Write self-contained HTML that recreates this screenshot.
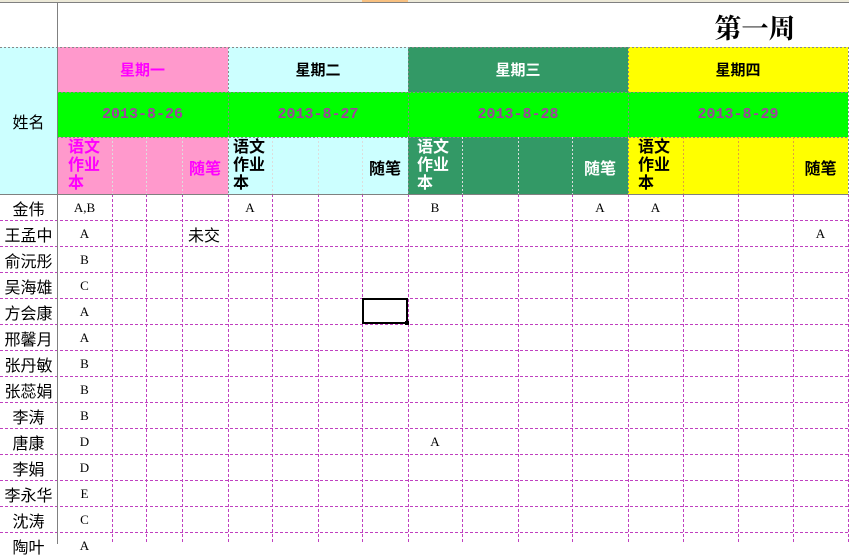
<!DOCTYPE html>
<html><head><meta charset="utf-8"><style>
body{margin:0;width:849px;height:544px;overflow:hidden;background:#fff;font-family:"Liberation Sans","Noto Sans CJK SC",sans-serif;position:relative}
.c{position:absolute;display:flex;align-items:center;justify-content:center;white-space:nowrap}
.b{font-weight:bold;font-size:15px}
.pk{background:#ff99cc;color:#ff00ff}.cy{background:#ccffff;color:#000}.gr{background:#339966;color:#fff}.ye{background:#ffff00;color:#000}
.dt{background:#00ff00;color:#a040a0;font-family:"Liberation Mono",monospace;font-size:15px;font-weight:bold}
.w{font-weight:bold;font-size:16px;line-height:18px;position:absolute;top:139px;white-space:nowrap}
.n{position:absolute;left:0;width:57px;height:26px;display:flex;align-items:center;justify-content:center;font-size:16px}
.l{position:absolute;height:26px;display:flex;align-items:center;justify-content:center;font-family:"Liberation Serif",serif;font-size:13px}
svg{position:absolute;left:0;top:0}
</style></head><body>
<div style="position:absolute;left:0;top:0;width:849px;height:3px;background:#ece9d8"></div>
<div style="position:absolute;left:362px;top:0;width:46px;height:3px;background:#f8c080"></div>
<div class="c" style="left:690px;top:5px;width:130px;height:42px;font-family:'Noto Serif CJK SC',serif;font-weight:bold;font-size:27px">第一周</div>

<div class="c cy" style="left:0;top:47px;width:57px;height:147px;font-size:16px">姓名</div>
<div class="c pk b" style="left:57px;top:47px;width:171px;height:45px">星期一</div>
<div class="c cy b" style="left:228px;top:47px;width:180px;height:45px">星期二</div>
<div class="c gr b" style="left:408px;top:47px;width:220px;height:45px">星期三</div>
<div class="c ye b" style="left:628px;top:47px;width:220px;height:45px">星期四</div>
<div class="c dt" style="left:57px;top:92px;width:171px;height:45px">2013-8-26</div>
<div class="c dt" style="left:228px;top:92px;width:180px;height:45px">2013-8-27</div>
<div class="c dt" style="left:408px;top:92px;width:220px;height:45px">2013-8-28</div>
<div class="c dt" style="left:628px;top:92px;width:220px;height:45px">2013-8-29</div>
<div class="pk" style="position:absolute;left:57px;top:137px;width:171px;height:57px"></div>
<div class="cy" style="position:absolute;left:228px;top:137px;width:180px;height:57px"></div>
<div class="gr" style="position:absolute;left:408px;top:137px;width:220px;height:57px"></div>
<div class="ye" style="position:absolute;left:628px;top:137px;width:220px;height:57px"></div>
<div class="w" style="left:68px;color:#ff00ff">语文<br>作业<br>本</div>
<div class="w" style="left:233px">语文<br>作业<br>本</div>
<div class="w" style="left:417px;color:#fff">语文<br>作业<br>本</div>
<div class="w" style="left:638px">语文<br>作业<br>本</div>
<div class="c b" style="left:182px;top:155px;width:46px;height:24px;font-size:16px;color:#ff00ff">随笔</div>
<div class="c b" style="left:362px;top:155px;width:46px;height:24px;font-size:16px">随笔</div>
<div class="c b" style="left:572px;top:155px;width:56px;height:24px;font-size:16px;color:#fff">随笔</div>
<div class="c b" style="left:793px;top:155px;width:55px;height:24px;font-size:16px">随笔</div>

<div class="n" style="top:195px">金伟</div><div class="n" style="top:221px">王孟中</div><div class="n" style="top:247px">俞沅彤</div><div class="n" style="top:273px">吴海雄</div><div class="n" style="top:299px">方会康</div><div class="n" style="top:325px">邢馨月</div><div class="n" style="top:351px">张丹敏</div><div class="n" style="top:377px">张蕊娟</div><div class="n" style="top:403px">李涛</div><div class="n" style="top:429px">唐康</div><div class="n" style="top:455px">李娟</div><div class="n" style="top:481px">李永华</div><div class="n" style="top:507px">沈涛</div><div class="n" style="top:533px">陶叶</div>

<div class="l" style="left:57px;width:55px;top:195px">A,B</div>
<div class="l" style="left:228px;width:44px;top:195px">A</div>
<div class="l" style="left:420px;width:30px;top:195px">B</div>
<div class="l" style="left:572px;width:56px;top:195px">A</div>
<div class="l" style="left:628px;width:55px;top:195px">A</div>
<div class="l" style="left:793px;width:55px;top:221px">A</div>
<div class="n" style="left:182px;width:46px;top:221px;justify-content:flex-start;padding-left:6px">未交</div>
<div class="l" style="left:420px;width:30px;top:429px">A</div>
<div class="l" style="left:57px;width:55px;top:221px">A</div>
<div class="l" style="left:57px;width:55px;top:247px">B</div>
<div class="l" style="left:57px;width:55px;top:273px">C</div>
<div class="l" style="left:57px;width:55px;top:299px">A</div>
<div class="l" style="left:57px;width:55px;top:325px">A</div>
<div class="l" style="left:57px;width:55px;top:351px">B</div>
<div class="l" style="left:57px;width:55px;top:377px">B</div>
<div class="l" style="left:57px;width:55px;top:403px">B</div>
<div class="l" style="left:57px;width:55px;top:429px">D</div>
<div class="l" style="left:57px;width:55px;top:455px">D</div>
<div class="l" style="left:57px;width:55px;top:481px">E</div>
<div class="l" style="left:57px;width:55px;top:507px">C</div>
<div class="l" style="left:57px;width:55px;top:533px">A</div>

<svg width="849" height="544" shape-rendering="crispEdges">
<g stroke="#c040c0" stroke-width="1" stroke-dasharray="3,2">
<path d="M112.5 194V544M146.5 194V544M182.5 194V544M228.5 194V544M272.5 194V544M318.5 194V544M362.5 194V544M408.5 194V544M462.5 194V544M518.5 194V544M572.5 194V544M628.5 194V544M683.5 194V544M738.5 194V544M793.5 194V544M848.5 194V544"/>
<path d="M0 220.5H849M0 246.5H849M0 272.5H849M0 298.5H849M0 324.5H849M0 350.5H849M0 376.5H849M0 402.5H849M0 428.5H849M0 454.5H849M0 480.5H849M0 506.5H849M0 532.5H849"/>
</g>
<g stroke="#888" stroke-width="1" stroke-dasharray="2,2">
<path d="M0 47.5H849M57 92.5H849M57 137.5H849M228.5 47V194M408.5 47V194M628.5 47V194M848.5 47V194"/>
</g>
<g stroke="#ddd" stroke-width="1" stroke-dasharray="2,2">
<path d="M112.5 137V194M146.5 137V194M182.5 137V194M272.5 137V194M318.5 137V194M362.5 137V194M462.5 137V194M518.5 137V194M572.5 137V194"/>
</g>
<g stroke="#e0a040" stroke-width="1" stroke-dasharray="2,2">
<path d="M683.5 137V194M738.5 137V194M793.5 137V194"/>
</g>
<path d="M57.5 3V544M0 194.5H849M0 2.5H849" stroke="#808080" stroke-width="1"/>
<rect x="363" y="299" width="44" height="24" fill="none" stroke="#000" stroke-width="2"/>
<rect x="405" y="321" width="4" height="4" fill="#000"/>
</svg>
</body></html>
